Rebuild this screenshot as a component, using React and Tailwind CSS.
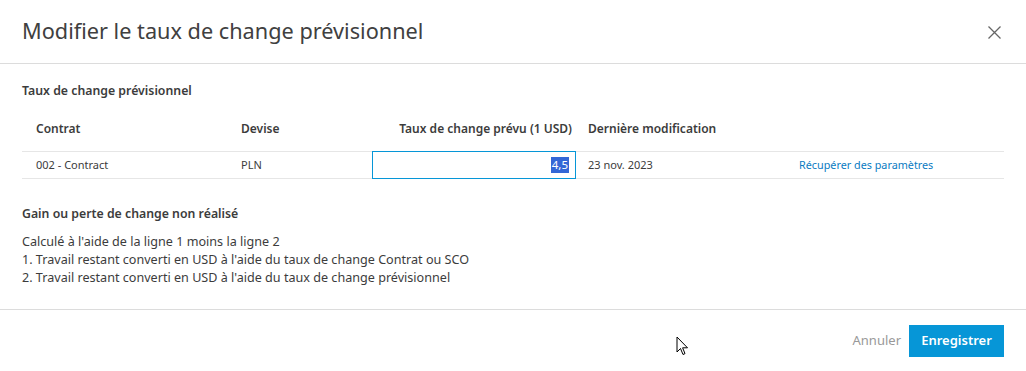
import React from "react";

const F = { fontFamily: '"Noto Sans", "Open Sans", Arial, sans-serif' };

export default function App() {
  return (
    <div
      className="relative w-[1026px] h-[371px] bg-white flex flex-col text-[#3c3c3c] overflow-hidden"
      style={F}
    >
      {/* Header */}
      <div className="h-[64px] shrink-0 flex items-center justify-between pl-[22px] pr-[25px] border-b border-[#dcdcdc]">
        <h1 className="text-[21.7px] font-normal text-[#404040] pb-[1px]">
          Modifier le taux de change prévisionnel
        </h1>
        <svg width="13" height="13" viewBox="0 0 13 13" className="mt-[1px]">
          <path d="M0.5 0.5 L12.5 12.5 M12.5 0.5 L0.5 12.5" stroke="#666" strokeWidth="1.3" fill="none" />
        </svg>
      </div>

      {/* Body */}
      <div className="flex-1 px-[22px] pt-[18px]">
        <div className="text-[12.3px] font-semibold leading-[18px]">Taux de change prévisionnel</div>

        <div className="mt-[18px] w-[982px]">
          <div className="grid grid-cols-[205px_145px_204px_209px_219px] h-[33px] items-start pt-[2px] text-[12px] leading-[18px] font-semibold">
            <div className="pl-[14px]">Contrat</div>
            <div className="pl-[14px]">Devise</div>
            <div className="text-right pr-[4px]">Taux de change prévu (1 USD)</div>
            <div className="pl-[12px]">Dernière modification</div>
            <div />
          </div>
          <div className="grid grid-cols-[205px_145px_204px_209px_219px] h-[28px] items-center text-[11px] border-y border-[#e6e6e6]">
            <div className="pl-[14px]">002 - Contract</div>
            <div className="pl-[14px]">PLN</div>
            <div className="h-[28px] -my-[1px] border border-[#0696d7] flex items-center justify-end pr-[6px]">
              <span className="bg-[#3367d6] text-white text-[11.5px] leading-[16px] px-[1px]">4,5</span>
            </div>
            <div className="pl-[12px]">23 nov. 2023</div>
            <div className="pl-[14px] text-[10.8px] text-[#0a7bc2]">Récupérer des paramètres</div>
          </div>
        </div>

        <div className="mt-[26px] text-[12.3px] font-semibold leading-[18px]">
          Gain ou perte de change non réalisé
        </div>
        <div className="mt-[10px] text-[12.6px] leading-[18px]">
          <div>Calculé à l'aide de la ligne 1 moins la ligne 2</div>
          <div>1. Travail restant converti en USD à l'aide du taux de change Contrat ou SCO</div>
          <div>2. Travail restant converti en USD à l'aide du taux de change prévisionnel</div>
        </div>
      </div>

      {/* Footer */}
      <div className="h-[62px] shrink-0 border-t border-[#dcdcdc] flex items-center justify-end pr-[22px] gap-[8px]">
        <button className="text-[13px] text-[#999999]">Annuler</button>
        <button className="h-[32px] w-[95px] bg-[#0696d7] text-white text-[13px] font-semibold">
          Enregistrer
        </button>
      </div>

      {/* mouse cursor */}
      <svg
        className="absolute left-[676px] top-[336px]"
        width="14"
        height="22"
        viewBox="0 0 14 22"
      >
        <path
          d="M1 1 L1 16 L4.5 12.5 L7 18.5 L9 17.6 L6.6 11.8 L11.5 11.8 Z"
          fill="white"
          stroke="black"
          strokeWidth="1"
        />
      </svg>
    </div>
  );
}
